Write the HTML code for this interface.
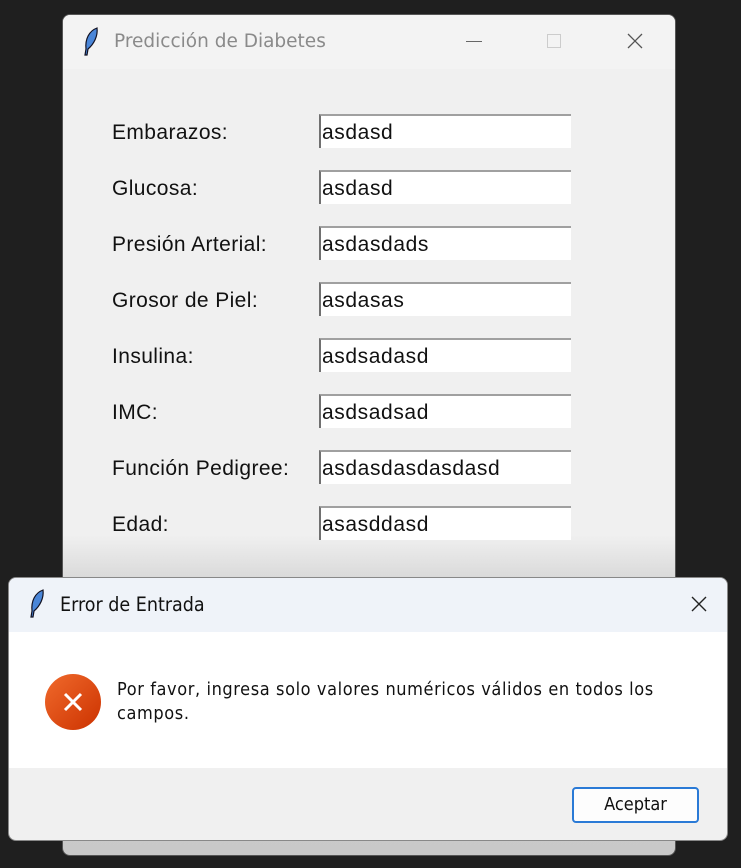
<!DOCTYPE html>
<html><head><meta charset="utf-8"><style>
html,body{margin:0;padding:0}
body{width:741px;height:868px;background:#1f1f1f;position:relative;overflow:hidden;font-family:"Liberation Sans",sans-serif}
.win{position:absolute;left:62px;top:14px;width:614px;height:842px;border-radius:8px;overflow:hidden;background:linear-gradient(#f0f0f0 0,#f0f0f0 520px,#d6d6d6 570px,#c8c8c8 100%);border:1px solid #555;box-sizing:border-box}
.tb{position:absolute;left:0;top:0;width:100%;height:54px;background:#f3f3f3}
.title{position:absolute;left:51px;top:16px;color:#8a8a8a;font-family:"DejaVu Sans","Liberation Sans",sans-serif;font-size:18.5px}
.lbl{position:absolute;left:49px;font-size:21px;letter-spacing:0.4px;color:#111}
.ent{position:absolute;left:256px;width:252px;height:34px;background:#fff;border-top:2px solid #a0a0a0;border-left:2px solid #707070;box-sizing:border-box;font-size:21px;letter-spacing:0.6px;color:#111;padding-left:1px;line-height:33px}
.dlg{position:absolute;left:8px;top:577px;width:720px;height:264px;border-radius:8px;overflow:hidden;background:#f0f0f0;border:1px solid #888;box-sizing:border-box}
.dtb{position:absolute;left:0;top:0;width:100%;height:54px;background:#eff3f9}
.dbody{position:absolute;left:0;top:54px;width:100%;height:136px;background:#fff}
.btn{position:absolute;left:563px;top:209px;width:127px;height:36px;border:2px solid #2a7ad6;border-radius:4px;box-sizing:border-box;background:#fdfdfd;text-align:center;line-height:32px;font-size:18px;color:#111;font-family:"DejaVu Sans Condensed","Liberation Sans",sans-serif}
</style></head><body>
<div class="win">
 <div class="tb">
  <svg style="position:absolute;left:18px;top:12px" width="20" height="30" viewBox="0 0 20 30"><path d="M16 1 C8 4 4 12 5 22 L4 28 L6 28 L7 22 C13 17 17 9 16 1Z" fill="#4a86d8" stroke="#112" stroke-width="1.2"/></svg>
  <div class="title">Predicción de Diabetes</div>
  <div style="position:absolute;left:403px;top:26px;width:16px;height:1px;background:#666"></div>
  <div style="position:absolute;left:484px;top:19px;width:12px;height:12px;border:1px solid #ccc"></div>
  <svg style="position:absolute;left:564px;top:18px" width="16" height="16"><path d="M1 1L15 15M15 1L1 15" stroke="#555" stroke-width="1.3"/></svg>
 </div>
 <div class="lbl" style="top:106px">Embarazos:</div><div class="ent" style="top:99px">asdasd</div>
 <div class="lbl" style="top:162px">Glucosa:</div><div class="ent" style="top:155px">asdasd</div>
 <div class="lbl" style="top:218px">Presión Arterial:</div><div class="ent" style="top:211px">asdasdads</div>
 <div class="lbl" style="top:274px">Grosor de Piel:</div><div class="ent" style="top:267px">asdasas</div>
 <div class="lbl" style="top:330px">Insulina:</div><div class="ent" style="top:323px">asdsadasd</div>
 <div class="lbl" style="top:386px">IMC:</div><div class="ent" style="top:379px">asdsadsad</div>
 <div class="lbl" style="top:442px">Función Pedigree:</div><div class="ent" style="top:435px">asdasdasdasdasd</div>
 <div class="lbl" style="top:498px">Edad:</div><div class="ent" style="top:491px">asasddasd</div>
</div>
<div class="dlg">
 <div class="dtb">
  <svg style="position:absolute;left:18px;top:11px" width="20" height="30" viewBox="0 0 20 30"><path d="M16 1 C8 4 4 12 5 22 L4 28 L6 28 L7 22 C13 17 17 9 16 1Z" fill="#4a86d8" stroke="#112" stroke-width="1.2"/></svg>
  <div style="position:absolute;left:51px;top:15px;font-size:19.5px;color:#111;font-family:'DejaVu Sans Condensed','Liberation Sans',sans-serif">Error de Entrada</div>
  <svg style="position:absolute;left:682px;top:18px" width="16" height="16"><path d="M1 1L15 15M15 1L1 15" stroke="#222" stroke-width="1.4"/></svg>
 </div>
 <div class="dbody">
  <svg style="position:absolute;left:35px;top:41px" width="58" height="58"><defs><linearGradient id="g" x1="0" y1="0" x2="1" y2="1"><stop offset="0" stop-color="#f06a2c"/><stop offset="1" stop-color="#cc3200"/></linearGradient></defs><circle cx="29" cy="29" r="28" fill="url(#g)"/><path d="M21 21L37 37M37 21L21 37" stroke="#fff" stroke-width="3"/></svg>
  <div style="position:absolute;left:108px;top:46px;width:565px;font-size:18px;letter-spacing:0.6px;line-height:24px;color:#111;font-family:'DejaVu Sans Condensed','Liberation Sans',sans-serif">Por favor, ingresa solo valores numéricos válidos en todos los campos.</div>
 </div>
 <div class="btn">Aceptar</div>
</div>
</body></html>
